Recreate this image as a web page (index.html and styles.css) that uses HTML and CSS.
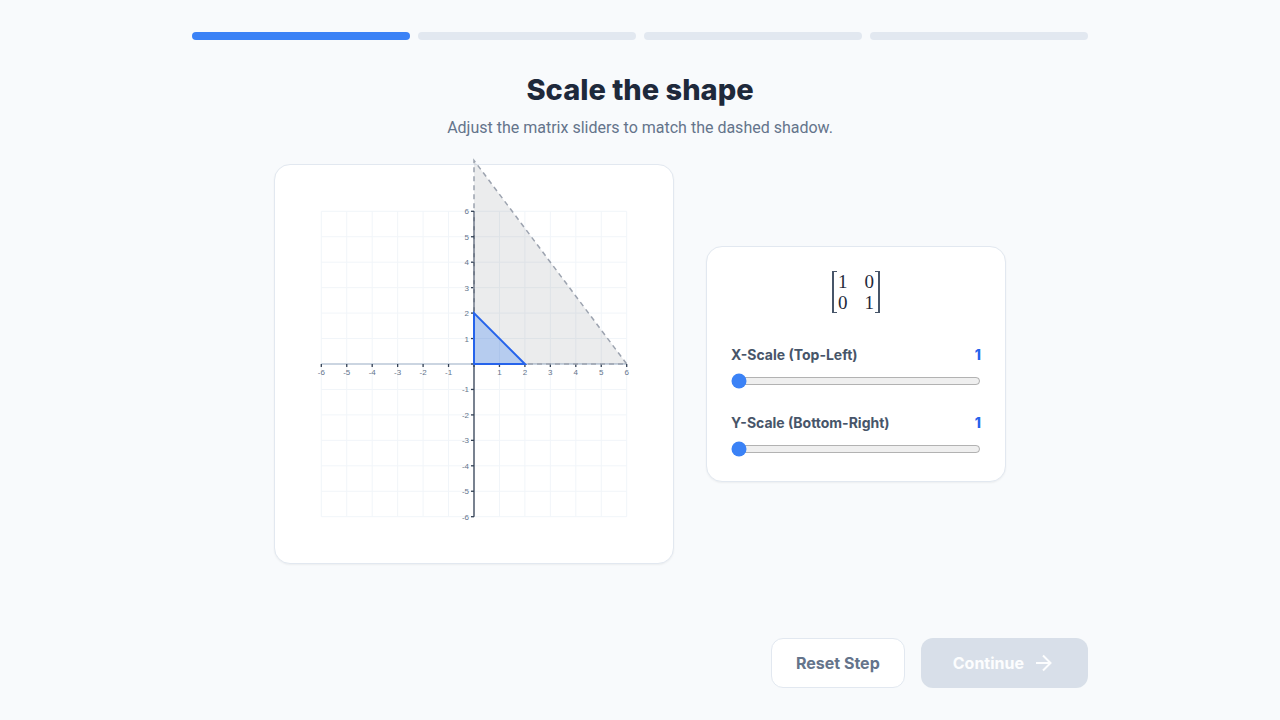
FILE: index.html
```html
<!DOCTYPE html>
<html lang="en">
<head>
  <meta charset="UTF-8" />
  <meta name="viewport" content="width=device-width, initial-scale=1.0"/>
  <title>Scale the shape</title>
  <link rel="stylesheet" href="styles.css">
</head>
<body>

  <div class="page">
    <div class="progress">
      <div class="step active"></div>
      <div class="step"></div>
      <div class="step"></div>
      <div class="step"></div>
    </div>

    <header>
      <h1>Scale the shape</h1>
      <p>Adjust the matrix sliders to match the dashed shadow.</p>
    </header>

    <main>
      <div class="card board">
        <svg id="plane" viewBox="-199 -199 398 398" role="img" aria-label="Coordinate plane">
          <g id="grid" class="grid"></g>
          <g id="axes" class="axes"></g>
          <polygon id="target" class="target"/>
          <polygon id="shape" class="shape"/>
        </svg>
      </div>

      <div class="card controls">
        <div class="matrix">
          <span id="m11">1</span><span>0</span>
          <span>0</span><span id="m22">1</span>
        </div>

        <div class="control">
          <div class="control-head">
            <label for="xScale">X-Scale (Top-Left)</label>
            <output id="xValue" for="xScale">1</output>
          </div>
          <input type="range" id="xScale" min="1" max="5" step="1" value="1">
        </div>

        <div class="control">
          <div class="control-head">
            <label for="yScale">Y-Scale (Bottom-Right)</label>
            <output id="yValue" for="yScale">1</output>
          </div>
          <input type="range" id="yScale" min="1" max="5" step="1" value="1">
        </div>
      </div>
    </main>

    <footer>
      <button type="button" class="reset-btn" id="resetBtn">Reset Step</button>
      <button type="button" class="continue-btn" id="continueBtn" disabled>
        Continue
        <svg width="24" height="24" viewBox="0 0 24 24" aria-hidden="true">
          <path d="M4 12h15M11 4.500l7.500 7.500-7.500 7.500"/>
        </svg>
      </button>
    </footer>
  </div>

  <script src="script.js"></script>
</body>
</html>
```

FILE: styles.css
```css
:root {
  --primary: #3b82f6;
  --primary-dark: #2563eb;
  --bg: #f8fafc;
  --border: #e2e8f0;
  --text-dark: #1e293b;
  --text: #475569;
  --text-muted: #64748b;
}

* {
  box-sizing: border-box;
  margin: 0;
  padding: 0;
}

body {
  font-family: Inter, sans-serif;
  font-size: 16px;
  line-height: 24px;
  background-color: var(--bg);
  color: var(--text-dark);
}

.page {
  max-width: 960px;
  min-height: 100vh;
  margin: 0 auto;
  padding: 32px;
  display: flex;
  flex-direction: column;
}

.progress {
  display: flex;
  gap: 8px;
  margin-bottom: 32px;
}

.step {
  flex: 1;
  height: 8px;
  border-radius: 4px;
  background-color: var(--border);
}

.step.active {
  background-color: var(--primary);
}

header {
  text-align: center;
  margin-bottom: 24px;
}

header h1 {
  font-size: 29px;
  line-height: 36px;
  font-weight: 800;
  margin-bottom: 8px;
}

header p {
  font-family: Roboto, sans-serif;
  color: var(--text-muted);
}

main {
  flex: 1;
  display: flex;
  flex-wrap: wrap;
  justify-content: center;
  align-items: center;
  align-content: flex-start;
  gap: 32px;
  margin-bottom: 32px;
}

.card {
  background-color: #fff;
  border: 1px solid var(--border);
  border-radius: 16px;
  box-shadow: 0 1px 2px rgba(0, 0, 0, 0.05);
}

.board {
  width: 400px;
  aspect-ratio: 1;
}

.board svg {
  display: block;
  width: 100%;
  height: 100%;
  overflow: visible;
}

.grid line {
  stroke: #f1f5f9;
}

.axes .x-axis {
  stroke: #cbd5e1;
  stroke-width: 2;
}

.axes .y-axis,
.axes .tick {
  stroke: #334155;
  stroke-width: 1.3;
}

.axes text {
  font-family: "Liberation Sans", sans-serif;
  font-size: 8px;
  fill: #64748b;
  text-anchor: middle;
}

.axes .y-label {
  text-anchor: end;
}

.target {
  fill: rgba(55, 65, 81, 0.1);
  stroke: #9ca3af;
  stroke-width: 1.5;
  stroke-dasharray: 5 4;
}

.shape {
  fill: rgba(59, 130, 246, 0.3);
  stroke: var(--primary-dark);
  stroke-width: 2;
}

.controls {
  width: 300px;
  padding: 24px;
}

.matrix {
  width: 48px;
  margin: 0 auto 32px;
  padding: 0 6px;
  display: grid;
  grid-template-columns: auto auto;
  justify-content: space-between;
  font-family: "Liberation Serif", serif;
  font-size: 19px;
  line-height: 21px;
  /* square brackets: two side bars plus four short feet */
  --ink: linear-gradient(var(--text), var(--text));
  background:
    var(--ink) left / 2px 100%,
    var(--ink) right / 2px 100%,
    var(--ink) left top / 5px 1px,
    var(--ink) left bottom / 5px 1px,
    var(--ink) right top / 5px 1px,
    var(--ink) right bottom / 5px 1px;
  background-repeat: no-repeat;
}

.control + .control {
  margin-top: 24px;
}

.control-head {
  display: flex;
  justify-content: space-between;
  margin-bottom: 8px;
  font-size: 14px;
  line-height: 20px;
  font-weight: 700;
}

.control-head label {
  color: var(--text);
}

.control-head output {
  font-weight: 800;
  color: var(--primary-dark);
}

input[type="range"] {
  display: block;
  width: 100%;
  height: 16px;
  accent-color: var(--primary);
}

footer {
  display: flex;
  justify-content: flex-end;
  gap: 16px;
}

button {
  display: flex;
  align-items: center;
  gap: 8px;
  font: inherit;
  font-weight: 700;
  border: none;
  border-radius: 12px;
  cursor: pointer;
}

.reset-btn {
  padding: 12px 24px;
  background-color: #fff;
  border: 1px solid var(--border);
  color: var(--text-muted);
}

.continue-btn {
  padding: 12px 32px;
  background-color: var(--primary);
  color: #fff;
}

.continue-btn:disabled {
  background-color: #cbd5e1;
  opacity: 0.7;
  cursor: not-allowed;
}

.continue-btn svg {
  fill: none;
  stroke: currentColor;
  stroke-width: 2;
}
```

FILE: script.js
```js
const UNIT = 25.45;
const MAX = 6;
const TARGET = { x: 3, y: 4 };

const xScale = document.getElementById("xScale");
const yScale = document.getElementById("yScale");
const grid = document.getElementById("grid");
const axes = document.getElementById("axes");

function add(parent, tag, attrs, text) {
  const el = document.createElementNS("http://www.w3.org/2000/svg", tag);
  for (const key in attrs) el.setAttribute(key, attrs[key]);
  if (text !== undefined) el.textContent = text;
  parent.appendChild(el);
}

function line(parent, x1, y1, x2, y2, cls) {
  add(parent, "line", { x1, y1, x2, y2, class: cls || "" });
}

// right triangle with both legs 2 units long, scaled by the matrix
function triangle(sx, sy) {
  return `0,0 ${2 * sx * UNIT},0 0,${-2 * sy * UNIT}`;
}

function drawPlane() {
  const end = MAX * UNIT;
  for (let i = -MAX; i <= MAX; i++) {
    line(grid, i * UNIT, -end, i * UNIT, end);
    line(grid, -end, i * UNIT, end, i * UNIT);
  }
  line(axes, -end, 0, end, 0, "x-axis");
  line(axes, 0, -end, 0, end, "y-axis");
  for (let i = -MAX; i <= MAX; i++) {
    const p = i * UNIT;
    line(axes, p, 0, p, 3, "tick");
    line(axes, -3, -p, 0, -p, "tick");
    if (i === 0) continue;
    add(axes, "text", { x: p, y: 11 }, i);
    add(axes, "text", { x: -5, y: 3 - p, class: "y-label" }, i);
  }
}

function update() {
  const sx = Number(xScale.value);
  const sy = Number(yScale.value);
  document.getElementById("shape").setAttribute("points", triangle(sx, sy));
  document.getElementById("m11").textContent = sx;
  document.getElementById("m22").textContent = sy;
  document.getElementById("xValue").textContent = sx;
  document.getElementById("yValue").textContent = sy;
  document.getElementById("continueBtn").disabled = sx !== TARGET.x || sy !== TARGET.y;
}

xScale.addEventListener("input", update);
yScale.addEventListener("input", update);
document.getElementById("resetBtn").addEventListener("click", () => {
  xScale.value = 1;
  yScale.value = 1;
  update();
});

document.getElementById("target").setAttribute("points", triangle(TARGET.x, TARGET.y));
drawPlane();
update();
```
